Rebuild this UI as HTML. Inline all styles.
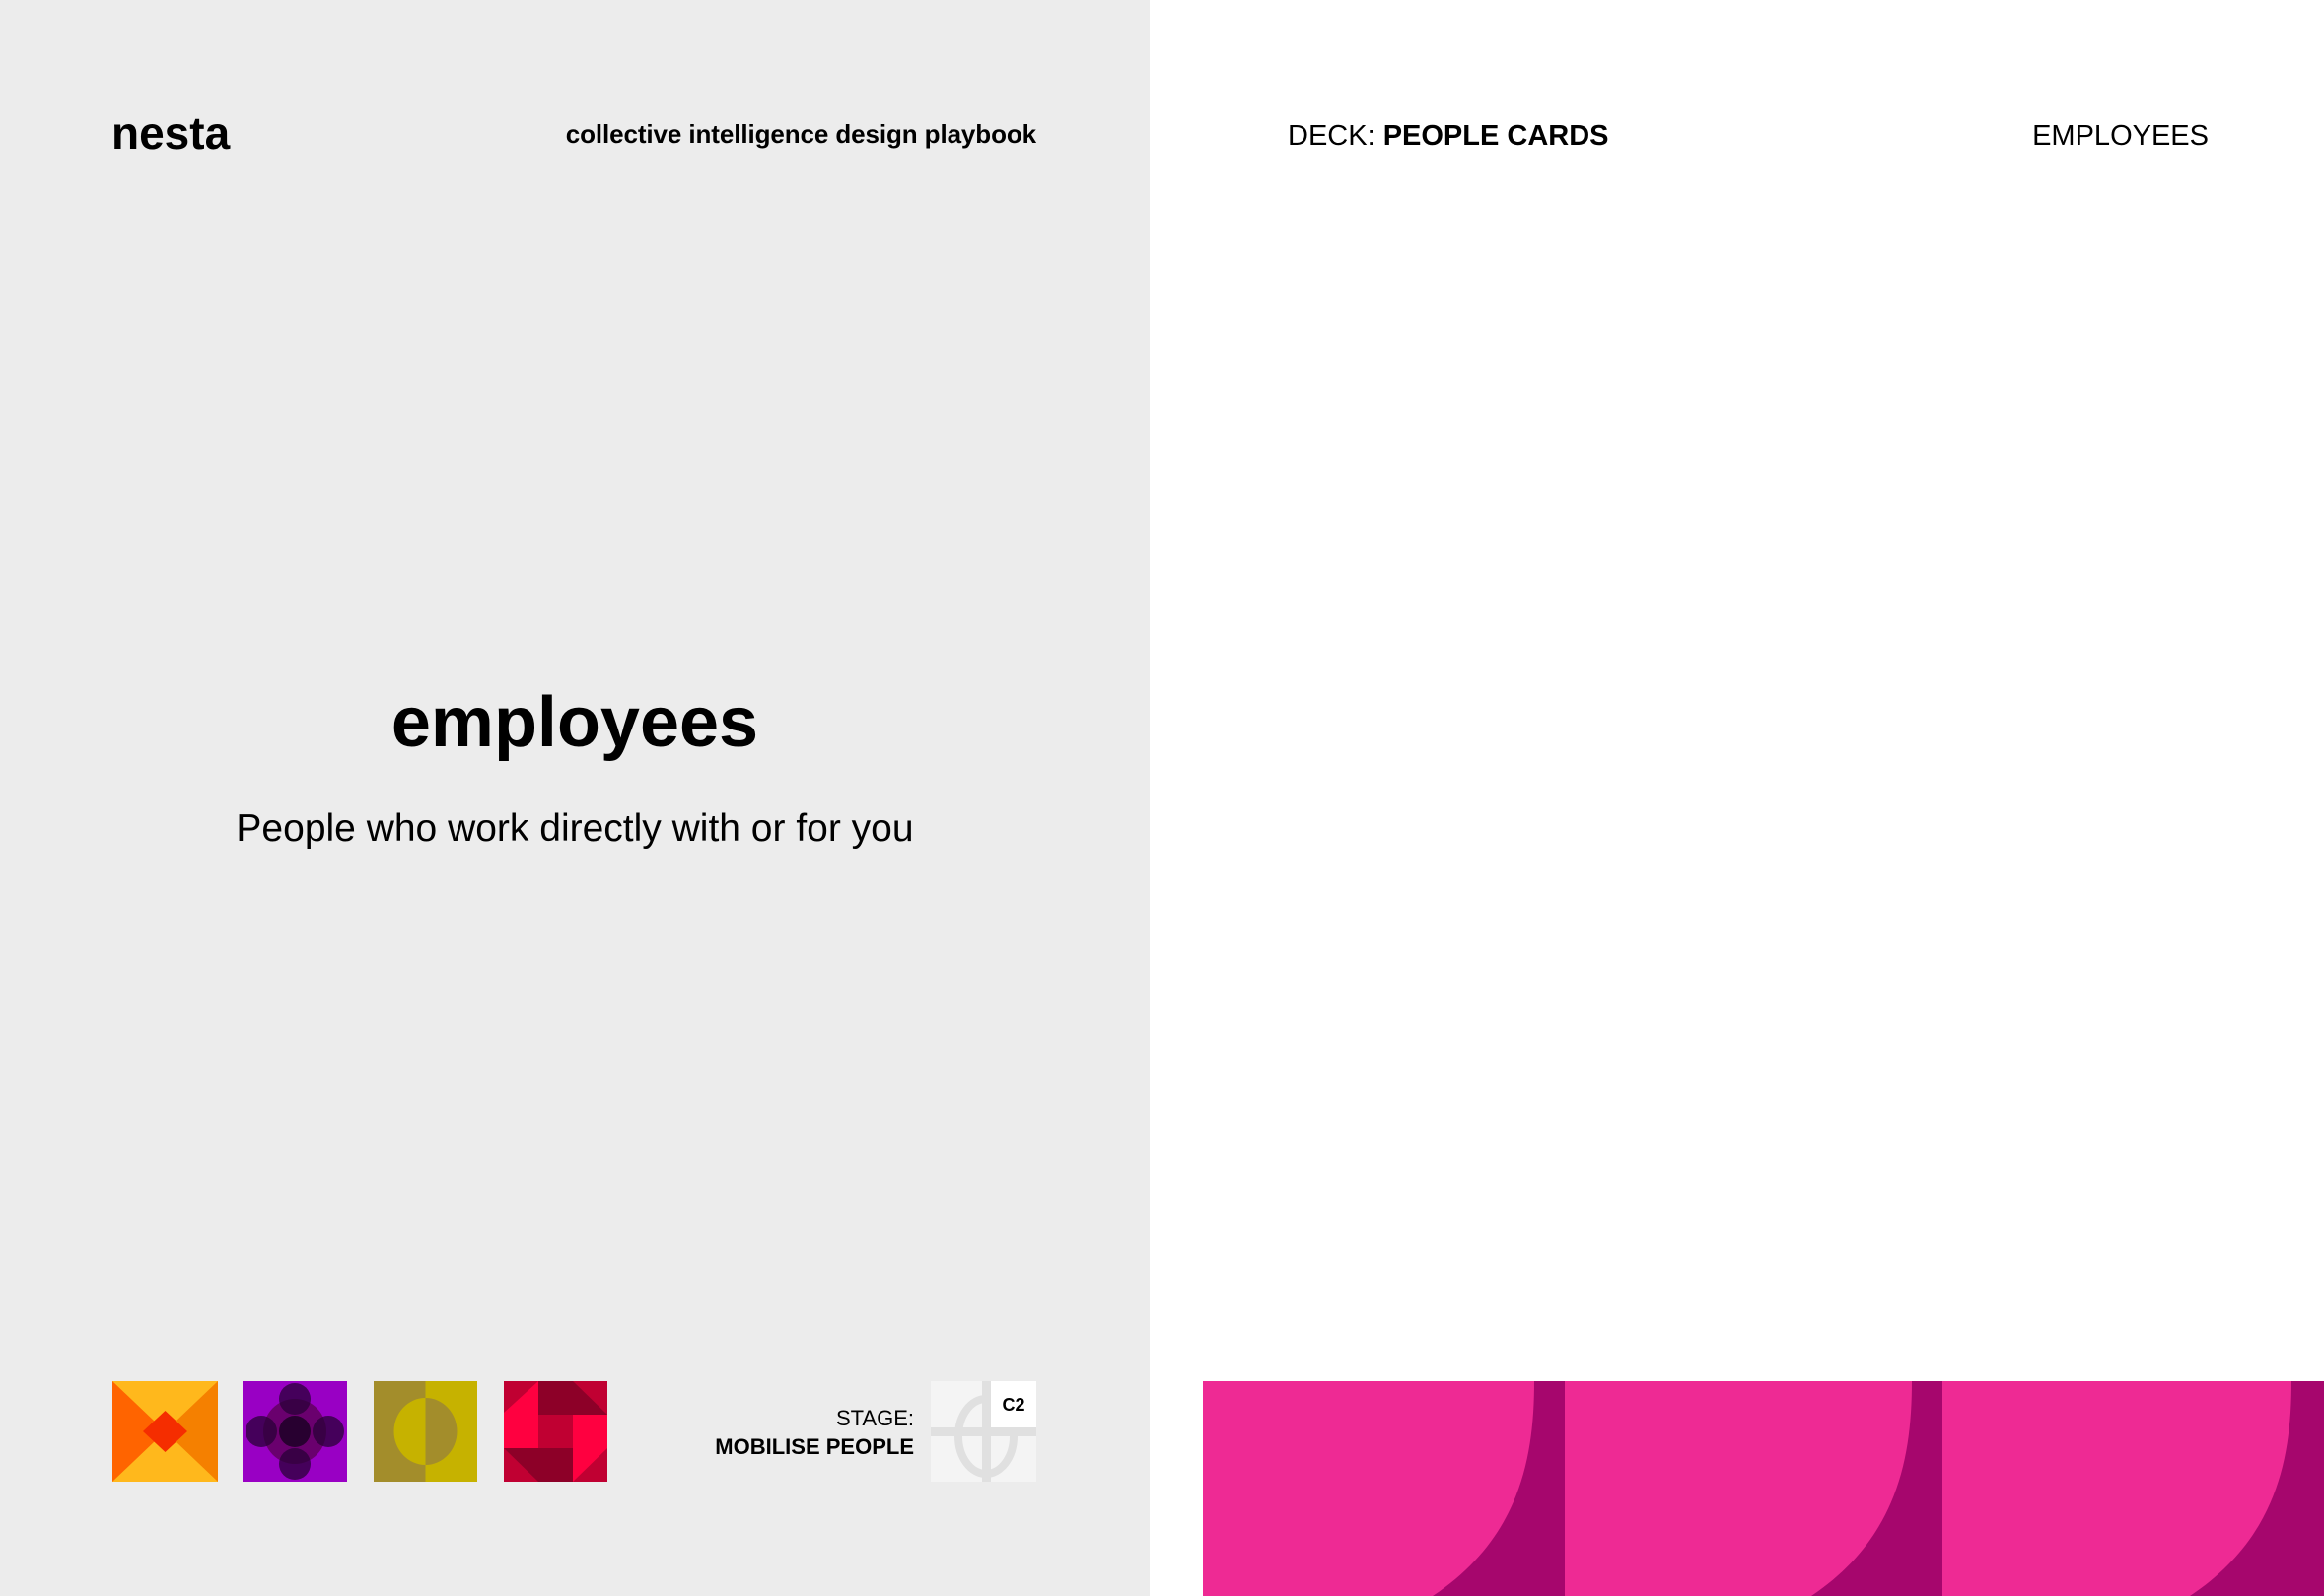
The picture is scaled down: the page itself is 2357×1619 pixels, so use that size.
<!DOCTYPE html>
<html><head><meta charset="utf-8"><style>
*{margin:0;padding:0;box-sizing:border-box}
body{width:2357px;height:1619px;position:relative;background:#fff;font-family:"Liberation Sans",sans-serif;color:#000;overflow:hidden}
.left{position:absolute;left:0;top:0;width:1166px;height:1619px;background:#ececec}
.t{position:absolute;white-space:nowrap;line-height:1}
svg{position:absolute;display:block}
</style></head><body>
<div class="t" style="left:0;top:0"></div>
<div class="left"></div>
<div class="t" style="left:113px;top:112px;font-size:46px;font-weight:bold;letter-spacing:0px">nesta</div>
<div class="t" style="right:1306px;top:123px;font-size:26px;font-weight:bold;letter-spacing:-0.1px">collective intelligence design playbook</div>
<div class="t" style="left:0;width:1166px;text-align:center;top:697px;font-size:72px;font-weight:bold">employees</div>
<div class="t" style="left:0;width:1166px;text-align:center;top:821px;font-size:39px">People who work directly with or for you</div>

<svg style="left:114px;top:1401px" width="107" height="102" viewBox="0 0 107 102">
<rect width="107" height="102" fill="#f58000"/>
<polygon points="0,0 53.5,51 0,102" fill="#ff6400"/>
<polygon points="0,0 107,0 53.5,51" fill="#ffb81c"/>
<polygon points="0,102 107,102 53.5,51" fill="#ffb81c"/>
<polygon points="53.5,30 76,51 53.5,72 31,51" fill="#f52d00"/>
</svg>
<svg style="left:246px;top:1401px" width="106" height="102" viewBox="0 0 106 102">
<rect width="106" height="102" fill="#9900c4"/>
<ellipse cx="53" cy="51" rx="32" ry="33" fill="#6a006e"/>
<g fill="#2a0038" fill-opacity="0.75">
<ellipse cx="53" cy="18" rx="16" ry="16"/><ellipse cx="53" cy="84" rx="16" ry="16"/>
<ellipse cx="19" cy="51" rx="16" ry="16"/><ellipse cx="87" cy="51" rx="16" ry="16"/>
</g>
<ellipse cx="53" cy="51" rx="16" ry="16" fill="#280030"/>
</svg>
<svg style="left:379px;top:1401px" width="105" height="102" viewBox="0 0 105 102">
<rect width="52.5" height="102" fill="#a38d2b"/>
<rect x="52.5" width="52.5" height="102" fill="#c6b200"/>
<path d="M52.5,17 A32,34 0 0 0 52.5,85 Z" fill="#c6b200"/>
<path d="M52.5,17 A32,34 0 0 1 52.5,85 Z" fill="#a38d2b"/>
</svg>
<svg style="left:511px;top:1401px" width="105" height="102" viewBox="0 0 105 102">
<rect width="105" height="102" fill="#c00032"/>
<polygon points="0,32 35,0 35,68 0,68" fill="#ff0040"/>
<polygon points="35,0 105,0 105,34 35,34" fill="#8d0028"/>
<polygon points="70,0 105,0 105,34" fill="#c00032"/>
<rect x="70" y="34" width="35" height="34" fill="#ff0040"/>
<polygon points="70,102 105,68 105,102" fill="#c00032"/>
<polygon points="0,68 70,68 70,102 35,102" fill="#8d0028"/>
<polygon points="70,68 105,68 70,102" fill="#ff0040"/>
</svg>

<div class="t" style="right:1430px;top:1428px;font-size:22px">STAGE:</div>
<div class="t" style="right:1430px;top:1457px;font-size:22px;font-weight:bold">MOBILISE PEOPLE</div>
<svg style="left:944px;top:1401px" width="107" height="102" viewBox="0 0 107 102">
<rect width="107" height="102" fill="#f4f4f4"/>
<ellipse cx="56" cy="56" rx="28" ry="38" fill="none" stroke="#e0e0e0" stroke-width="8"/>
<rect x="52" y="0" width="9" height="102" fill="#e0e0e0"/>
<rect x="0" y="47" width="107" height="9" fill="#e0e0e0"/>
<rect x="61" y="0" width="46" height="47" fill="#fff"/>
<text x="84" y="30" font-family="Liberation Sans" font-weight="bold" font-size="18" text-anchor="middle">C2</text>
</svg>

<div class="t" style="left:1306px;top:124px;font-size:29px">DECK: <b>PEOPLE CARDS</b></div>
<div class="t" style="right:117px;top:124px;font-size:29px">EMPLOYEES</div>

<svg style="left:1220px;top:1401px" width="1137" height="218" viewBox="0 0 1137 218">
<g>
<rect x="0" width="367" height="218" fill="#a6066d"/>
<path d="M0,0 H336 C336,80 320,160 233,218 H0 Z" fill="#ee2a94"/>
</g>
<g transform="translate(367,0)">
<rect x="0" width="383" height="218" fill="#a6066d"/>
<path d="M0,0 H352 C352,80 336,160 250,218 H0 Z" fill="#ee2a94"/>
</g>
<g transform="translate(750,0)">
<rect x="0" width="387" height="218" fill="#a6066d"/>
<path d="M0,0 H354 C354,80 338,160 251,218 H0 Z" fill="#ee2a94"/>
</g>
</svg>
</body></html>
